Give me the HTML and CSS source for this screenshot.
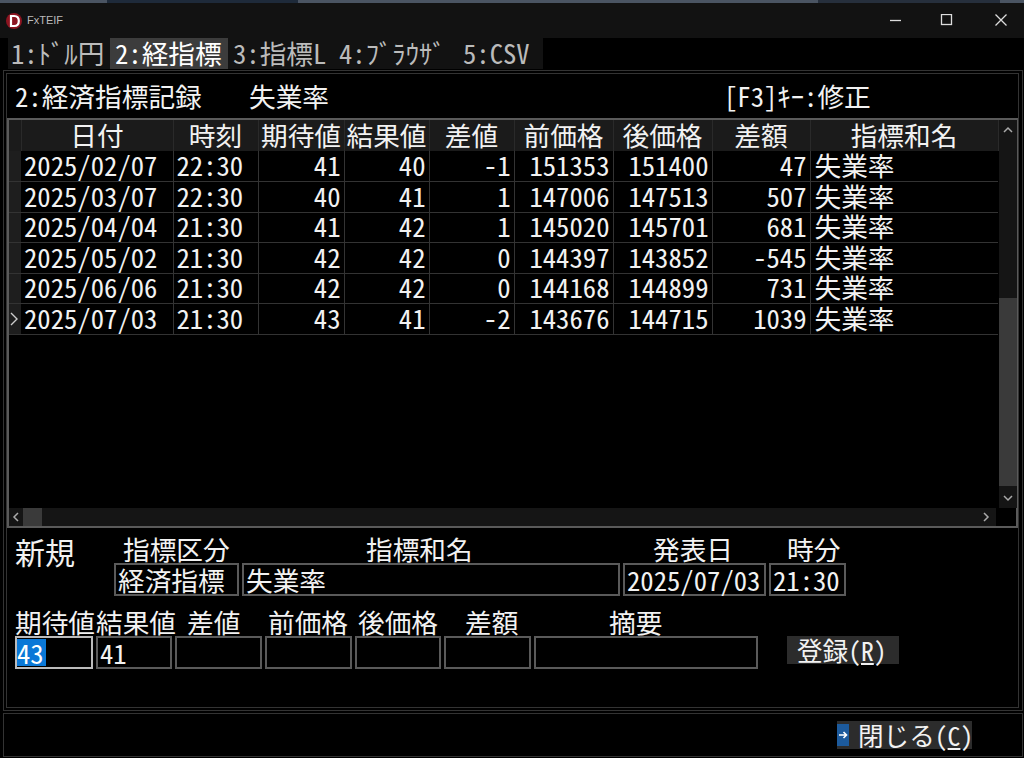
FILE: index.html
```html
<!DOCTYPE html>
<html lang="ja">
<head>
<meta charset="utf-8">
<title>FxTEIF</title>
<link rel="stylesheet" href="styles.css">
</head>
<body>
<div class="app">
  <div class="strip"></div>
  <header class="titlebar">
    <svg class="logo" width="20" height="20" viewBox="0 0 20 20"><circle cx="10" cy="10" r="8" fill="#8c1420"/><path d="M7 5h3.200c3 0 4.600 2 4.600 5s-1.600 5-4.600 5H7z" fill="none" stroke="#fff" stroke-width="2.200"/></svg>
    <span class="apptitle">FxTEIF</span>
    <div class="winbtns">
      <svg width="14" height="14" viewBox="0 1 14 14"><path d="M1 7.500h11" stroke="#ddd" stroke-width="1.300"/></svg>
      <svg width="14" height="14" viewBox="0 1 14 14"><rect x="1.500" y="1.500" width="10" height="10" fill="none" stroke="#ddd" stroke-width="1.300"/></svg>
      <svg width="14" height="14" viewBox="0 1 14 14"><path d="M1.500 1.500l11 11M12.500 1.500l-11 11" stroke="#ddd" stroke-width="1.300"/></svg>
    </div>
  </header>
  <nav class="tabs">
    <span class="tab t1">1:ﾄﾞﾙ円</span><span class="tab active t2">2:経指標</span><span class="tab t3">3:指標L</span><span class="tab t4">4:ﾌﾞﾗｳｻﾞ</span><span class="tab t5">5:CSV</span>
  </nav>
  <main class="outer">
    <div class="inner">
      <div class="heading">
        <span class="h-title">2:経済指標記録</span>
        <span class="h-name">失業率</span>
        <span class="h-key">[F3]ｷｰ:修正</span>
      </div>
      <section class="grid-frame">
        <div class="grid-top">
          <table class="grid">
            <colgroup>
              <col class="c0"><col class="c1"><col class="c2"><col class="c3"><col class="c4"><col class="c5"><col class="c6"><col class="c7"><col class="c8"><col class="c9">
            </colgroup>
            <thead>
              <tr><th></th><th>日付</th><th>時刻</th><th>期待値</th><th>結果値</th><th>差値</th><th>前価格</th><th>後価格</th><th>差額</th><th>指標和名</th></tr>
            </thead>
            <tbody>
              <tr><th></th><td>2025/02/07</td><td>22:30</td><td class="n">41</td><td class="n">40</td><td class="n">-1</td><td class="n">151353</td><td class="n">151400</td><td class="n">47</td><td>失業率</td></tr>
              <tr><th></th><td>2025/03/07</td><td>22:30</td><td class="n">40</td><td class="n">41</td><td class="n">1</td><td class="n">147006</td><td class="n">147513</td><td class="n">507</td><td>失業率</td></tr>
              <tr><th></th><td>2025/04/04</td><td>21:30</td><td class="n">41</td><td class="n">42</td><td class="n">1</td><td class="n">145020</td><td class="n">145701</td><td class="n">681</td><td>失業率</td></tr>
              <tr><th></th><td>2025/05/02</td><td>21:30</td><td class="n">42</td><td class="n">42</td><td class="n">0</td><td class="n">144397</td><td class="n">143852</td><td class="n">-545</td><td>失業率</td></tr>
              <tr><th></th><td>2025/06/06</td><td>21:30</td><td class="n">42</td><td class="n">42</td><td class="n">0</td><td class="n">144168</td><td class="n">144899</td><td class="n">731</td><td>失業率</td></tr>
              <tr><th class="cur"><svg width="12" height="16" viewBox="0 0 12 16"><path d="M2 2l6 6-6 6" fill="none" stroke="#ccc" stroke-width="1.400"/></svg></th><td>2025/07/03</td><td>21:30</td><td class="n">43</td><td class="n">41</td><td class="n">-2</td><td class="n">143676</td><td class="n">144715</td><td class="n">1039</td><td>失業率</td></tr>
            </tbody>
          </table>
          <div class="vbar">
            <svg class="arrow" width="18" height="14" viewBox="0 0 18 14"><path d="M5 9l4-4 4 4" fill="none" stroke="#aaa" stroke-width="1.500"/></svg>
            <div class="vtrack"><div class="vthumb"></div></div>
            <svg class="arrow" width="18" height="14" viewBox="0 0 18 14"><path d="M5 5l4 4 4-4" fill="none" stroke="#aaa" stroke-width="1.500"/></svg>
          </div>
        </div>
        <div class="hbar">
          <svg width="14" height="14" viewBox="0 0 14 14"><path d="M9 3l-4 4 4 4" fill="none" stroke="#aaa" stroke-width="1.500"/></svg>
          <div class="hthumb"></div>
          <div class="hspace"></div>
          <svg width="14" height="14" viewBox="0 0 14 14"><path d="M5 3l4 4-4 4" fill="none" stroke="#aaa" stroke-width="1.500"/></svg>
          <div class="corner"></div>
        </div>
      </section>
      <section class="form">
        <div class="frow r1">
          <div class="newlabel">新規</div>
          <div class="fld w-kind"><label class="l-kind">指標区分</label><div class="box">経済指標</div></div>
          <div class="fld w-name"><label class="l-name">指標和名</label><div class="box">失業率</div></div>
          <div class="fld w-date"><label class="l-date">発表日</label><div class="box">2025/07/03</div></div>
          <div class="fld w-time"><label class="l-time">時分</label><div class="box">21:30</div></div>
        </div>
        <div class="frow r2">
          <div class="fld w-a"><label>期待値</label><div class="box focus"><span class="sel">43</span></div></div>
          <div class="fld w-b"><label>結果値</label><div class="box">41</div></div>
          <div class="fld w-c"><label class="l-c">差値</label><div class="box"></div></div>
          <div class="fld w-c"><label class="l-d">前価格</label><div class="box"></div></div>
          <div class="fld w-d"><label class="l-d">後価格</label><div class="box"></div></div>
          <div class="fld w-c"><label class="l-e">差額</label><div class="box"></div></div>
          <div class="fld w-f"><label class="l-f">摘要</label><div class="box"></div></div>
          <button class="btn reg" type="button">登録(<u>R</u>)</button>
        </div>
      </section>
    </div>
  </main>
  <footer class="footer">
    <button class="btn close" type="button"><svg class="closeicon" width="12" height="24" viewBox="0 0 12 24"><rect y="1" width="12" height="22" fill="#1c5a9c"/><path d="M2 12h7M6.500 9l3 3-3 3" fill="none" stroke="#fff" stroke-width="1.600"/></svg><span>閉じる(<u>C</u>)</span></button>
  </footer>
</div>
</body>
</html>
```
FILE: styles.css
```css
* { box-sizing: border-box; }
html, body { margin: 0; padding: 0; background: #000; }
body {
  font-family: "Noto Sans CJK JP", sans-serif;
  font-feature-settings: "hwid";
  color: #f2f2f2;
  font-size: 26.7px;
  line-height: 1;
}
.app { width: 1024px; height: 758px; display: flex; flex-direction: column; overflow: hidden; }
.strip { height: 3px; background: linear-gradient(to right, #4a5462 107px, #1e2a3a 107px, #1e2a3a 298px, #4a5462 298px, #4a5462 818px, #262f3c 818px, #262f3c 1000px, #4a5462 1000px); }
.titlebar { height: 35px; background: #121212; display: flex; align-items: center; padding-left: 4px; }
.logo { margin-right: 3px; }
.apptitle { font-family: "Liberation Sans", sans-serif; font-size: 11px; color: #bbb; font-feature-settings: normal; }
.winbtns { margin-left: auto; display: flex; gap: 37px; padding-right: 16px; align-items: center; }
.winbtns svg:last-child { margin-left: 3px; }
.tabs { height: 31px; display: flex; padding-left: 8px; background: #000; }
.tab { background: #121212; color: #bbb; display: flex; align-items: center; padding-left: 3px; height: 31px; white-space: nowrap; }
.active { background: #3c3c3c; color: #fff; }
.t1 { width: 102px; }
.t2 { width: 118px; padding-left: 5px; }
.t3 { width: 105px; padding-left: 5px; }
.t4 { width: 125px; padding-left: 6px; }
.t5 { width: 85px; padding-left: 5px; }
.outer { height: 641px; border: 1px solid #333; margin: 1px 1px 0 3px; padding: 2px; }
.inner { height: 100%; border: 1px solid #333; margin-right: 1px; display: flex; flex-direction: column; }
.heading { height: 44px; display: flex; align-items: center; padding-left: 8px; flex: none; }
.h-title { width: 234px; flex: none; white-space: nowrap; }
.h-name { width: 475px; flex: none; }
.h-key { white-space: nowrap; }
.grid-frame { height: 410px; flex: none; border: 2px solid #5a5a5a; display: flex; flex-direction: column; }
.grid-top { flex: 1; display: flex; min-height: 0; }
.grid { table-layout: fixed; border-collapse: collapse; width: 989px; flex: none; align-self: flex-start; }
.c0 { width: 12px; } .c1 { width: 152px; } .c2 { width: 85px; } .c3 { width: 86px; } .c4 { width: 85px; }
.c5 { width: 85px; } .c6 { width: 99px; } .c7 { width: 99px; } .c8 { width: 98px; } .c9 { width: 188px; }
.grid thead th { height: 31px; background: #1b1b1b; font-weight: 400; border-right: 1px solid #2a2a2a; padding: 0; white-space: nowrap; }
.grid tbody th { background: #1e1e1e; padding: 0; border-bottom: 1px solid #333; }
.grid tbody td { height: 30.5px; padding: 0 3px 1px; border-right: 1px solid #333; border-bottom: 1px solid #333; white-space: nowrap; }
.grid tbody td:last-child { border-right: 0; padding-left: 4px; }
.grid td.n { text-align: right; }
.cur svg { display: block; }
.vbar { width: 18px; flex: none; background: #151515; display: flex; flex-direction: column; }
.arrow { flex: none; margin: 3px 0; }
.vtrack { flex: 1; padding-top: 158px; }
.vthumb { height: 188px; background: #3a3a3a; }
.hbar { height: 18px; flex: none; background: #151515; display: flex; align-items: center; }
.hthumb { width: 19px; height: 18px; background: #3a3a3a; }
.hspace { flex: 1; }
.corner { width: 20px; height: 18px; background: #000; margin-left: 3px; }
.form { flex: 1; padding-top: 8px; display: flex; flex-direction: column; gap: 13px; }
.frow { display: flex; gap: 3px; padding-left: 8px; }
.newlabel { width: 99px; flex: none; font-size: 30px; margin-right: -3px; }
.fld { display: flex; flex-direction: column; flex: none; }
.fld label { display: block; height: 27px; white-space: nowrap; }
.box { height: 33px; border: 2px solid #5a5a5a; padding: 1px 2px; white-space: nowrap; line-height: 27px; }
.focus { border-color: #bbb; padding: 1px 0 0; }
.sel { display: inline-block; background: #0a78d7; color: #fff; height: 27px; width: 29px; }
.w-kind { width: 125px; } .w-name { width: 378px; } .w-date { width: 143px; } .w-time { width: 77px; }
.l-kind { padding-left: 9px; } .l-name { padding-left: 124px; } .l-date { padding-left: 30px; } .l-time { padding-left: 18px; }
.w-a { width: 78px; } .w-b { width: 76px; } .w-c { width: 87px; } .w-d { width: 86px; } .w-f { width: 224px; }
.l-c { padding-left: 12px; } .l-d { padding-left: 3px; } .l-e { padding-left: 21px; } .l-f { padding-left: 75px; }
.btn { font: inherit; font-size: 25.6px; font-feature-settings: inherit; color: inherit; background: #2c2c2c; border: 0; padding: 0; display: flex; align-items: center; white-space: nowrap; }
.reg { width: 112px; height: 28px; margin: 27px 0 0 26px; padding-left: 10px; }
.footer { height: 44px; border: 1px solid #333; margin: 2px 1px 0 3px; display: flex; justify-content: flex-end; align-items: center; padding-right: 50px; flex: none; }
.close { width: 135px; height: 28px; gap: 9px; }
.closeicon { flex: none; }
```
